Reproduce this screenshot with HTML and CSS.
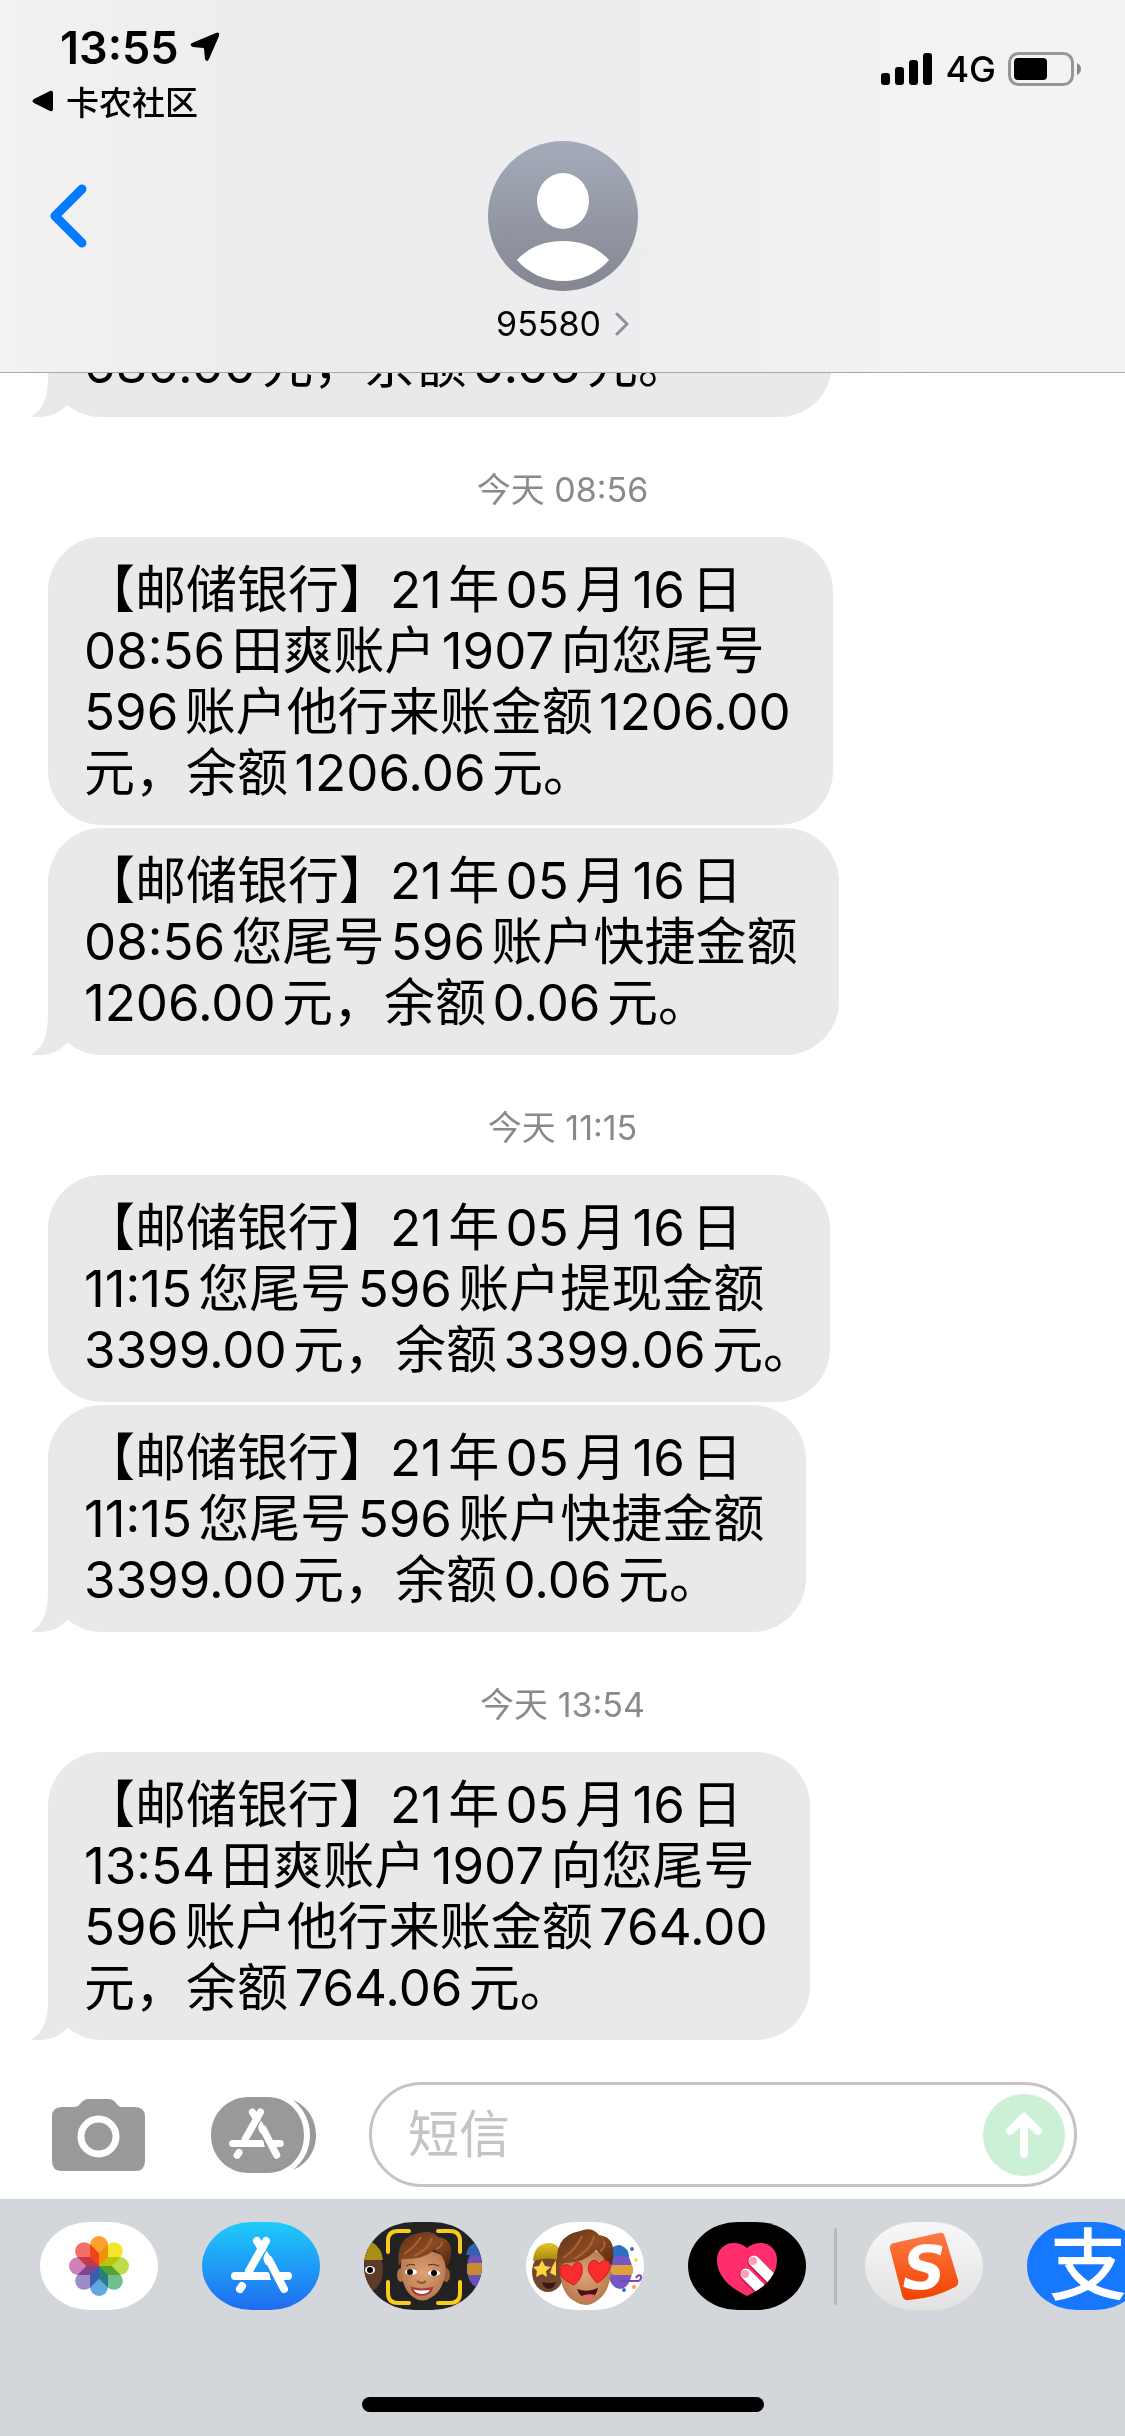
FILE: index.html
```html
<!DOCTYPE html>
<html lang="zh-CN">
<head>
<meta charset="utf-8">
<title>95580</title>
<link rel="stylesheet" href="styles.css">
</head>
<body>

<!-- shared shapes -->
<svg class="defs" width="0" height="0" aria-hidden="true">
  <symbol id="tail" viewBox="0 0 44 56">
    <path d="M16 0 V14 C16 34 12 48 1 54 C0 55 0 56 2 56 C16 57 27 53 35 44 L44 36 V0 Z"/>
  </symbol>
  <symbol id="store" viewBox="0 0 118 88">
    <g fill="none" stroke="currentColor" stroke-width="8" stroke-linecap="round">
      <path d="M64 19 L47 49 M55 19 L60 27 M33 54 H64 M78 54 H86 M67 38 L82 67"/>
      <path d="M40 64 L38 67"/>
    </g>
    <path fill="currentColor" d="M65 29 C60 35 61 38 64 43 L71 39 Z M44 50 H66 L69 58 H44 Z"/>
  </symbol>
</svg>

<header class="header">
  <div class="status">
    <div class="status-left">
      <div class="clock">
        <span>13:55</span>
        <svg width="30" height="30" viewBox="0 0 30 30"><path d="M26 1 Q30 -1 29 4 L19 27 Q17 31 15 27 L14 17 Q14 16 13 16 L3 15 Q-1 13 2 11 Z"/></svg>
      </div>
      <a class="return" href="#">
        <svg width="22" height="22" viewBox="0 0 22 22"><path d="M18 1 Q21 0 21 3 V19 Q21 22 18 21 L2 13 Q-1 11 2 9 Z"/></svg>
        <span>卡农社区</span>
      </a>
    </div>
    <div class="status-right">
      <svg width="52" height="32" viewBox="0 0 52 32">
        <rect x="0" y="20" width="9" height="12" rx="3"/>
        <rect x="14" y="14" width="9" height="18" rx="3"/>
        <rect x="28" y="7" width="9" height="25" rx="3"/>
        <rect x="42" y="0" width="9" height="32" rx="3"/>
      </svg>
      <span>4G</span>
      <svg width="74" height="34" viewBox="0 0 74 34">
        <rect x="1.5" y="1.5" width="63" height="31" rx="9" fill="none" stroke="#969696" stroke-width="3"/>
        <rect x="6" y="6" width="33" height="22" rx="4"/>
        <path d="M69 11 Q73 13 73 17 Q73 21 69 23 Z" fill="#8a8a8a"/>
      </svg>
    </div>
  </div>

  <div class="contact-row">
    <button type="button" class="back" aria-label="返回">
      <svg width="38" height="64" viewBox="0 0 38 64"><path d="M33 5 L6 32 L33 59" fill="none" stroke="#007aff" stroke-width="9" stroke-linecap="round" stroke-linejoin="round"/></svg>
    </button>
    <button type="button" class="contact">
      <svg width="150" height="150" viewBox="0 0 150 150">
        <defs>
          <linearGradient id="avatar" x1="0" y1="0" x2="0" y2="1">
            <stop offset="0" stop-color="#a5abba"/>
            <stop offset="1" stop-color="#848791"/>
          </linearGradient>
        </defs>
        <circle cx="75" cy="75" r="75" fill="url(#avatar)"/>
        <ellipse cx="75" cy="60" rx="26" ry="28" fill="#fff"/>
        <path d="M29 119 C41 106 56 100 75 100 C94 100 109 106 121 119 C110 132 93 140 75 140 C57 140 40 132 29 119 Z" fill="#fff"/>
      </svg>
      <span class="contact-name">95580
        <svg width="14" height="24" viewBox="0 0 14 24"><path d="M2 2 L12 12 L2 22" fill="none" stroke="#8a939c" stroke-width="3" stroke-linecap="round" stroke-linejoin="round"/></svg>
      </span>
    </button>
  </div>
</header>

<main class="thread">
  <div class="bubble earlier">680.00元，余额0.06元。<svg class="tail"><use href="#tail"/></svg></div>

  <time class="stamp">今天 08:56</time>
  <div class="bubble">【邮储银行】21年05月16日<br>08:56田爽账户1907向您尾号<br>596账户他行来账金额1206.00<br>元，余额1206.06元。</div>
  <div class="bubble">【邮储银行】21年05月16日<br>08:56您尾号596账户快捷金额<br>1206.00元，余额0.06元。<svg class="tail"><use href="#tail"/></svg></div>

  <time class="stamp">今天 11:15</time>
  <div class="bubble hang-stop">【邮储银行】21年05月16日<br>11:15您尾号596账户提现金额<br>3399.00元，余额3399.06元。</div>
  <div class="bubble">【邮储银行】21年05月16日<br>11:15您尾号596账户快捷金额<br>3399.00元，余额0.06元。<svg class="tail"><use href="#tail"/></svg></div>

  <time class="stamp">今天 13:54</time>
  <div class="bubble">【邮储银行】21年05月16日<br>13:54田爽账户1907向您尾号<br>596账户他行来账金额764.00<br>元，余额764.06元。<svg class="tail"><use href="#tail"/></svg></div>
</main>

<form class="composer">
  <button type="button" class="camera" aria-label="相机">
    <svg width="93" height="72" viewBox="0 0 93 72">
      <path fill="#999" d="M10 8 H23 Q26 8 28 5 Q32 0 37 0 H56 Q61 0 64 4 Q67 8 69 8 H83 Q93 8 93 18 V62 Q93 72 83 72 H10 Q0 72 0 62 V18 Q0 8 10 8 Z"/>
      <circle cx="46.500" cy="37.500" r="17.500" fill="none" stroke="#fff" stroke-width="7"/>
    </svg>
  </button>
  <button type="button" class="drawer" aria-label="App">
    <svg width="106" height="76" viewBox="0 0 106 76">
      <path fill="#999" d="M0 38 C0 16 17 0 38 0 H56 C77 0 93 16 93 38 C93 60 77 76 56 76 H38 C17 76 0 60 0 38 Z M82 3 C96 9 105 22 105 38 C105 54 96 67 82 73 C93 64 99 52 99 38 C99 24 93 12 82 3 Z"/>
      <svg x="-8" y="-2" width="106" height="79" color="#fff"><use href="#store"/></svg>
    </svg>
  </button>
  <div class="field">
    <input type="text" placeholder="短信" aria-label="短信">
    <button type="submit" class="send" aria-label="发送">
      <svg width="82" height="82" viewBox="0 0 82 82"><path d="M41 60 V24 M27 37 L41 23 L55 37" fill="none" stroke="#fff" stroke-width="8" stroke-linecap="round" stroke-linejoin="round"/></svg>
    </button>
  </div>
</form>

<footer class="dock">
  <nav class="apps">
    <button type="button" class="app photos" aria-label="照片">
      <svg width="118" height="88" viewBox="0 0 118 88">
        <g class="petals" transform="translate(59 44)">
          <path fill="#fba033" d="M0 0 L-9 -9 V-21 A9 9 0 0 1 9 -21 V-9 Z"/>
          <path fill="#f5e52b" transform="rotate(45)" d="M0 0 L-9 -9 V-21 A9 9 0 0 1 9 -21 V-9 Z"/>
          <path fill="#bfdc4c" transform="rotate(90)" d="M0 0 L-9 -9 V-21 A9 9 0 0 1 9 -21 V-9 Z"/>
          <path fill="#6dbf91" transform="rotate(135)" d="M0 0 L-9 -9 V-21 A9 9 0 0 1 9 -21 V-9 Z"/>
          <path fill="#60a9df" transform="rotate(180)" d="M0 0 L-9 -9 V-21 A9 9 0 0 1 9 -21 V-9 Z"/>
          <path fill="#9c8cc9" transform="rotate(225)" d="M0 0 L-9 -9 V-21 A9 9 0 0 1 9 -21 V-9 Z"/>
          <path fill="#d180b3" transform="rotate(270)" d="M0 0 L-9 -9 V-21 A9 9 0 0 1 9 -21 V-9 Z"/>
          <path fill="#f26f68" transform="rotate(315)" d="M0 0 L-9 -9 V-21 A9 9 0 0 1 9 -21 V-9 Z"/>
        </g>
      </svg>
    </button>
    <button type="button" class="app store" aria-label="App Store">
      <svg width="118" height="88"><use href="#store"/></svg>
    </button>
    <button type="button" class="app memoji" aria-label="拟我表情">
      <svg width="118" height="88" viewBox="0 0 118 88">
        <defs>
          <linearGradient id="hair" x1="0" y1="0" x2="1" y2="1">
            <stop offset="0" stop-color="#5f3015"/>
            <stop offset=".5" stop-color="#8a4a22"/>
            <stop offset="1" stop-color="#4c240e"/>
          </linearGradient>
          <radialGradient id="skin" cx=".5" cy=".45" r=".6">
            <stop offset="0" stop-color="#dda276"/>
            <stop offset="1" stop-color="#b5754b"/>
          </radialGradient>
          <linearGradient id="hat" x1="0" y1="0" x2="0" y2="1">
            <stop offset="0" stop-color="#e3c427"/>
            <stop offset="1" stop-color="#a88408"/>
          </linearGradient>
        </defs>
        <ellipse cx="4" cy="48" rx="15" ry="22" fill="#5d3a29"/>
        <path d="M-6 38 Q-4 20 8 20 Q18 26 19 38 Z" fill="#a98e16"/>
        <ellipse cx="6" cy="48" rx="5" ry="4" fill="#fff"/><circle cx="6" cy="48" r="3"/>
        <ellipse cx="114" cy="46" rx="11" ry="19" fill="#6b50b8"/>
        <path d="M102 33 Q104 20 118 20 V33 Z" fill="#2f64b4"/>
        <rect x="103" y="41" width="20" height="12" rx="3" fill="#c88b31"/>
        <ellipse cx="37" cy="53" rx="4" ry="7" fill="#b47245"/>
        <ellipse cx="82" cy="53" rx="4" ry="7" fill="#9c5e38"/>
        <path d="M37 38 Q36 66 49 75 Q58 82 68 75 Q83 66 82 36 Q60 20 37 38 Z" fill="url(#skin)"/>
        <path d="M35 44 Q31 14 56 11 Q68 8 74 15 Q91 17 86 39 L82 46 Q80 32 70 28 Q59 38 38 37 Z" fill="url(#hair)"/>
        <path d="M40 32 Q50 26 57 15 M50 34 Q64 28 68 16 M72 27 Q78 25 78 20" fill="none" stroke="#a9632f" stroke-width="2"/>
        <path d="M42 44 Q46 41 51 43 M64 43 Q69 41 75 44" fill="none" stroke="#5a3018" stroke-width="1"/>
        <ellipse cx="47" cy="50" rx="6" ry="3" fill="#fff"/><ellipse cx="70" cy="51" rx="6" ry="3" fill="#fff"/>
        <circle cx="46" cy="50" r="3"/><circle cx="70" cy="51" r="3"/>
        <path d="M53 59 Q58 63 62 59" fill="none" stroke="#925331" stroke-width="2"/>
        <path d="M48 66 Q58 69 68 66 Q66 73 57 73 Q49 72 48 66 Z" fill="#fff" stroke="#a8393a" stroke-width="2"/>
        <path d="M24 30 V19 Q24 9 34 9 H45 M74 9 H86 Q96 9 96 19 V30 M24 60 V71 Q24 81 34 81 H45 M74 81 H86 Q96 81 96 71 V60" fill="none" stroke="#f8cb1c" stroke-width="4" stroke-linecap="round"/>
      </svg>
    </button>
    <button type="button" class="app stickers" aria-label="拟我表情贴纸">
      <svg width="118" height="88" viewBox="0 0 118 88">
        <ellipse cx="22" cy="50" rx="16" ry="20" fill="#70472e"/>
        <path d="M7 39 Q8 21 24 21 Q35 22 37 39 Q22 34 7 39 Z" fill="url(#hat)"/>
        <path d="M16 38 L19 44 L25 45 L20 49 L21 55 L16 52 L10 55 L11 49 L7 45 L13 44 Z M30 38 V54 L24 51 L26 45 Z" fill="#ffd23f"/>
        <path d="M16 60 Q23 62 30 60 Q28 67 23 67 Q18 67 16 60 Z" fill="#3b1714"/>
        <ellipse cx="94" cy="48" rx="12" ry="19" fill="#7656c4"/>
        <path d="M84 34 Q84 23 94 23 Q103 26 103 35 Z" fill="#2c70c5"/>
        <rect x="85" y="43" width="22" height="10" rx="3" fill="#e0a13a"/>
        <path d="M93 59 H112 Q116 58 115 54 Q112 52 110 56" fill="none" stroke="#7b43bc" stroke-width="2"/>
        <circle cx="106" cy="27" r="2" fill="#3576cf"/><circle cx="110" cy="38" r="2" fill="#f3e34e"/>
        <circle cx="98" cy="68" r="2" fill="#3576cf"/><circle cx="108" cy="65" r="2" fill="#f0a74a"/>
        <path d="M34 38 Q32 72 50 80 Q61 87 72 78 Q87 68 85 35 Q60 20 34 38 Z" fill="url(#skin)"/>
        <path d="M32 48 Q26 14 54 9 Q66 4 73 13 Q92 15 86 42 L82 44 Q78 34 70 28 Q57 42 38 41 Z" fill="url(#hair)"/>
        <path d="M37 36 Q50 28 56 14 M48 37 Q65 28 68 14 M74 29 Q80 26 78 19" fill="none" stroke="#a9632f" stroke-width="2"/>
        <path d="M48 63 C39 59 33 54 34 48 C36 42 42 41 46 46 C49 38 56 39 56 46 C57 53 53 59 48 63 Z" fill="#fb2d2c" stroke="#c51b20"/>
        <path d="M71 61 C64 53 61 49 63 43 C65 37 71 37 73 42 C78 36 85 38 84 45 C83 51 78 57 71 61 Z" fill="#fb2d2c" stroke="#c51b20"/>
        <path d="M51 67 Q61 71 72 66 Q70 76 62 77 Q54 76 51 67 Z" fill="#4a1113"/>
        <path d="M55 74 Q62 71 69 73 Q66 78 61 78 Q57 77 55 74 Z" fill="#e06c66"/>
      </svg>
    </button>
    <button type="button" class="app touch" aria-label="Digital Touch">
      <svg width="118" height="88" viewBox="0 0 118 88">
        <clipPath id="heart"><path d="M59 74 C42 66 29 54 29 38 C29 21 48 16 59 26 C70 16 89 21 89 38 C89 54 76 66 59 74 Z"/></clipPath>
        <g clip-path="url(#heart)">
          <rect width="118" height="88" fill="#ff2d6b"/>
          <path d="M66 40 L92 66 M58 53 L84 79" stroke="#c91549" stroke-width="13" stroke-linecap="round"/>
          <path d="M66 39 L92 65 M58 52 L84 78" stroke="#fff" stroke-width="11" stroke-linecap="round"/>
          <circle cx="65" cy="39" r="4" fill="#ff9dbb"/><circle cx="57" cy="52" r="4" fill="#ff9dbb"/>
        </g>
      </svg>
    </button>
    <span class="divider"></span>
    <button type="button" class="app sogou" aria-label="搜狗输入法">
      <svg width="118" height="88" viewBox="0 0 118 88">
        <defs>
          <linearGradient id="card" x1="0" y1="0" x2="0" y2="1">
            <stop offset="0" stop-color="#ff7a45"/>
            <stop offset="1" stop-color="#f04300"/>
          </linearGradient>
        </defs>
        <path d="M29 21 L74 11 Q79 10 80 15 L93 58 Q94 63 90 65 Q70 76 44 78 Q38 79 37 73 L25 27 Q24 22 29 21 Z" fill="url(#card)"/>
        <text x="59" y="67" class="logo-s">S</text>
      </svg>
    </button>
    <button type="button" class="app alipay" aria-label="支付宝">
      <svg width="118" height="88" viewBox="0 0 118 88"><text x="61" y="72" class="logo-zhi">支</text></svg>
    </button>
  </nav>
  <div class="home-bar"></div>
</footer>

</body>
</html>
```
FILE: styles.css
```css
* {
  box-sizing: border-box;
}

body {
  margin: 0;
  height: 100vh;
  display: flex;
  flex-direction: column;
  overflow: hidden;
  background: #fff;
  color: #000;
  font-family: Inter, "Noto Sans CJK SC", sans-serif;
}

button {
  display: block;
  flex: none;
  padding: 0;
  border: none;
  background: none;
  color: inherit;
  font: inherit;
  cursor: pointer;
}

svg {
  display: block;
  flex: none;
}

.defs {
  position: absolute;
}

/* header */

.header {
  flex: none;
  height: 373px;
  border-bottom: 1px solid #a9a9ab;
  background: linear-gradient(to right, #f2f2f3, #ececee 25%, #ededef 55%, #f3f3f4 85%);
}

.status {
  display: flex;
  justify-content: space-between;
  height: 141px;
  padding: 20px 43px 0 32px;
}

.clock {
  display: flex;
  align-items: center;
  gap: 11px;
  height: 54px;
  padding-left: 28px;
  font-size: 45px;
  font-weight: 600;
}

.return {
  display: flex;
  align-items: center;
  gap: 12px;
  height: 54px;
  color: #000;
  font-size: 33px;
  font-weight: 500;
  text-decoration: none;
}

.status-right {
  display: flex;
  align-items: center;
  gap: 12px;
  height: 98px;
  font-size: 36px;
  font-weight: 500;
}

.contact-row {
  display: grid;
  grid-template-columns: 1fr auto 1fr;
  align-items: start;
}

.back {
  justify-self: start;
  margin: 43px 0 0 49px;
}

.contact {
  display: flex;
  flex-direction: column;
  align-items: center;
  gap: 13px;
}

.contact-name {
  display: flex;
  align-items: center;
  gap: 14px;
  font-size: 34px;
  line-height: 40px;
}

/* messages */

.thread {
  flex: 1;
  min-height: 0;
  display: flex;
  flex-direction: column;
  align-items: flex-start;
  justify-content: flex-end;
  gap: 3px;
  overflow: hidden;
  padding-left: 48px;
}

.bubble {
  position: relative;
  flex: none;
  padding: 22px 42px 22px 36px;
  border-radius: 54px;
  background: #e9e9eb;
  font-size: 51px;
  line-height: 61px;
  white-space: nowrap;
  text-autospace: normal;
}

.earlier {
  min-width: 784px;
}

/* the blank half of a closing full stop hangs into the padding */
.hang-stop {
  padding-right: 16px;
}

.tail {
  position: absolute;
  left: -16px;
  bottom: 0;
  width: 44px;
  height: 56px;
  fill: #e9e9eb;
}

.stamp {
  flex: none;
  align-self: stretch;
  height: 114px;
  padding: 50px 48px 0 0;
  color: #8a8a8e;
  font-size: 34px;
  line-height: 40px;
  text-align: center;
}

/* input row */

.composer {
  flex: none;
  display: flex;
  align-items: center;
  height: 159px;
  padding: 42px 48px 12px 52px;
}

.drawer {
  margin: 0 52px 0 66px;
}

.field {
  flex: 1;
  min-width: 0;
  display: flex;
  align-items: center;
  height: 105px;
  padding: 0 9px 0 36px;
  border: 3px solid #c4c4c6;
  border-radius: 53px;
}

.field input {
  flex: 1;
  min-width: 0;
  padding: 0;
  border: none;
  outline: none;
  background: none;
  font-family: inherit;
  font-size: 51px;
}

.field input::placeholder {
  color: #c4c4c6;
}

.send {
  border-radius: 50%;
  background: #cbf0d6;
}

/* app strip */

.dock {
  flex: none;
  height: 237px;
  padding-top: 23px;
  background: #d3d6db;
}

.apps {
  display: flex;
  gap: 44px;
  overflow: hidden;
  padding-left: 40px;
}

.app {
  width: 118px;
  height: 88px;
  overflow: hidden;
  border-radius: 50px / 44px;
  background: #fff;
}

.petals {
  isolation: isolate;
}

.petals path {
  mix-blend-mode: multiply;
}

.store {
  background: linear-gradient(#1fcbfb, #1e6cf0);
  color: #fff;
}

.memoji {
  background: #222;
}

.touch {
  background: #000;
}

.divider {
  flex: none;
  align-self: center;
  width: 3px;
  height: 77px;
  margin: 0 -16px;
  border-radius: 2px;
  background: #b5b8bc;
}

.sogou {
  background: linear-gradient(#f7f7f7, #e2e2e2);
}

.alipay {
  background: #1677ff;
}

.logo-s {
  fill: #fff;
  font-family: "DejaVu Sans", sans-serif;
  font-size: 60px;
  font-style: italic;
  font-weight: 700;
  text-anchor: middle;
}

.logo-zhi {
  fill: #fff;
  font-size: 78px;
  font-weight: 500;
  text-anchor: middle;
}

.home-bar {
  width: 402px;
  height: 15px;
  margin: 87px auto 0;
  border-radius: 8px;
  background: #000;
}
```
